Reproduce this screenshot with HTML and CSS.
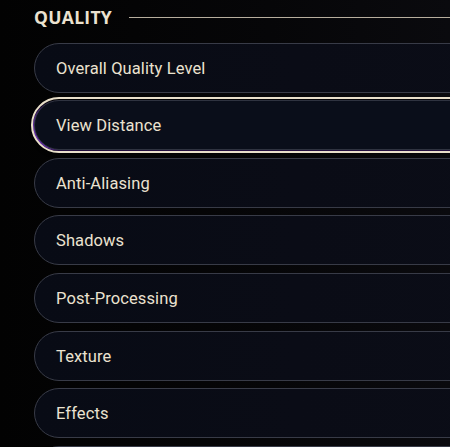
FILE: index.html
```html
<!DOCTYPE html>
<html lang="en">
<head>
	<meta charset="utf-8">
	<title>Quality settings</title>
	<link rel="stylesheet" href="styles.css">
</head>
<body>
	<div class="panel">
		<div class="sectionHead">
			<span class="sectionTitle">QUALITY</span>
			<span class="sectionLine"></span>
		</div>
		<ul class="optList">
			<li class="opt">Overall Quality Level</li>
			<li class="opt active">View Distance</li>
			<li class="opt">Anti-Aliasing</li>
			<li class="opt">Shadows</li>
			<li class="opt">Post-Processing</li>
			<li class="opt">Texture</li>
			<li class="opt">Effects</li>
			<li class="opt"></li>
		</ul>
	</div>
</body>
</html>
```
FILE: styles.css
```css
html,body{margin: 0;padding: 0;height: 100%;overflow: hidden;}
body{background: linear-gradient(90deg, #020202 0%, #060608 60%, #0a0a0e 100%);font-family: Roboto, "Liberation Sans", sans-serif;color: #ebe2d0;}
.panel{width: 520px;padding: 0 0 0 34px;}
.sectionHead{display: flex;align-items: center;height: 35px;}
.sectionTitle{font-family: "Open Sans", Lato, sans-serif;font-weight: bold;font-size: 17.5px;letter-spacing: 0.3px;line-height: 35px;}
.sectionLine{flex: 1;height: 1px;margin-left: 17px;background: #b7ae9e;}
.optList{list-style: none;margin: 7.7px 0 0;padding: 0;display: flex;flex-direction: column;gap: 7.57px;}
.opt{box-sizing: border-box;height: 50px;line-height: 49px;padding-left: 21px;border: 1px solid #383b47;border-radius: 25px;background: linear-gradient(90deg, #080b15 0%, #0a0c16 50%, #0b0d17 100%);font-size: 16.5px;font-weight: 400;letter-spacing: 0.1px;}
.opt.active{outline: 2px solid #e9dfca;outline-offset: 1px;border-color: #2f3340;background: #0a0e1a;box-shadow: -2px 1px 2px -1px rgba(150,60,255,.9), 0 4px 4px rgba(0,0,0,.6);}
```
